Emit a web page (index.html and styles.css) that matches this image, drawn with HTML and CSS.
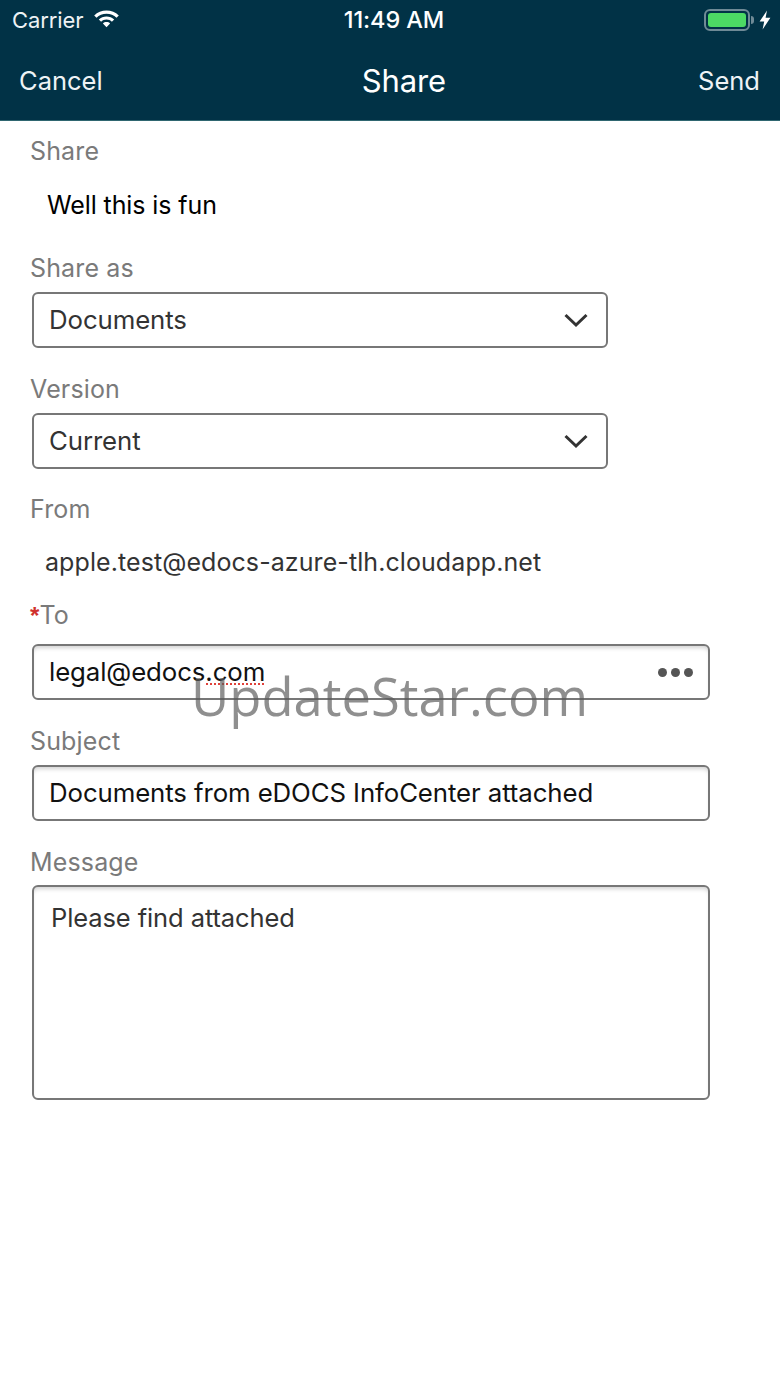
FILE: index.html
```html
<!DOCTYPE html>
<html lang="en">
<head>
<meta charset="utf-8">
<title>Share</title>
<link rel="stylesheet" href="styles.css">
</head>
<body>
<div class="page">
  <header class="header">
    <div class="status">
      <div class="status-left">
        <span class="carrier">Carrier</span>
        <svg class="wifi" width="27" height="20" viewBox="0 0 27 20"><path d="M13.5 2.5C8.8 2.5 4.4 4.3 1.2 7.4l2.3 2.4c2.6-2.5 6.1-4 10-4s7.4 1.5 10 4l2.3-2.4C22.6 4.3 18.2 2.5 13.5 2.5z" fill="#fff"/><path d="M13.5 8.4c-2.9 0-5.7 1.1-7.7 3.1l2.3 2.3c1.4-1.4 3.3-2.2 5.4-2.2s4 .8 5.4 2.2l2.3-2.3c-2-2-4.8-3.1-7.7-3.1z" fill="#fff"/><path d="M13.5 14c-1.4 0-2.7.5-3.6 1.4l3.6 3.8 3.6-3.8c-.9-.9-2.2-1.4-3.6-1.4z" fill="#fff"/></svg>
      </div>
      <span class="clock">11:49 AM</span>
      <div class="status-right">
        <div class="battery"><div class="battery-fill"></div></div>
        <div class="battery-cap"></div>
        <svg class="bolt" width="12" height="20" viewBox="0 0 12 20"><path d="M8 .5 .6 11.6h4.6L3.6 19.5 11.4 7.8H6.6z" fill="#fff"/></svg>
      </div>
    </div>
    <nav class="nav">
      <span class="nav-btn">Cancel</span>
      <span class="nav-title">Share</span>
      <span class="nav-btn">Send</span>
    </nav>
  </header>
  <main class="form">
    <div class="label">Share</div>
    <div class="static static-doc">Well this is fun</div>
    <div class="label label-as">Share as</div>
    <div class="box box-short">
      <span class="box-text">Documents</span>
      <svg class="chevron" width="26" height="16" viewBox="0 0 26 16"><path d="M2.5 3 13 13 23.5 3" fill="none" stroke="#333" stroke-width="3"/></svg>
    </div>
    <div class="label label-version">Version</div>
    <div class="box box-short">
      <span class="box-text">Current</span>
      <svg class="chevron" width="26" height="16" viewBox="0 0 26 16"><path d="M2.5 3 13 13 23.5 3" fill="none" stroke="#333" stroke-width="3"/></svg>
    </div>
    <div class="label label-next">From</div>
    <div class="static static-from">apple.test@edocs-azure-tlh.cloudapp.net</div>
    <div class="label label-to"><span class="req">*</span>To</div>
    <div class="box box-wide box-inset box-to">
      <span class="box-text box-text-black"><span>legal@edocs</span><span class="misspelt">.com</span></span>
      <span class="dots"><i></i><i></i><i></i></span>
    </div>
    <div class="label label-subject">Subject</div>
    <div class="box box-wide box-inset">
      <span class="box-text box-text-black">Documents from eDOCS InfoCenter attached</span>
    </div>
    <div class="label label-message">Message</div>
    <div class="box box-wide box-inset box-area">
      <span class="box-text box-text-area">Please find attached</span>
    </div>
  </main>
  <div class="watermark">UpdateStar.com</div>
</div>
</body>
</html>
```
FILE: styles.css
```css
* { box-sizing: border-box; }
html, body { margin: 0; padding: 0; background: #fff; }
body { font-family: Inter, "Liberation Sans", sans-serif; }
.page { position: relative; width: 780px; height: 1387px; overflow: hidden; background: #fff; }
.header { height: 121px; background: #013246; border-bottom: 1px solid #2f6670; color: #fff; display: flex; flex-direction: column; }
.status { height: 39px; padding: 0 12px; display: grid; grid-template-columns: 1fr auto 1fr; align-items: center; }
.status-left { display: flex; align-items: center; gap: 10px; }
.carrier { font-size: 22px; letter-spacing: -0.1px; color: #eef3f5; }
.wifi { margin-top: -3px; }
.clock { font-size: 23.5px; font-weight: 500; letter-spacing: -0.1px; margin-left: 8px; }
.status-right { display: flex; align-items: center; justify-content: flex-end; margin-right: -3px; }
.battery { width: 46px; height: 22px; border: 2px solid #6f8a96; border-radius: 6px; padding: 2px; }
.battery-fill { height: 100%; background: #4cd964; border-radius: 3px; }
.battery-cap { width: 3px; height: 8px; background: #6f8a96; border-radius: 0 3px 3px 0; margin-left: 1px; }
.bolt { margin-left: 5px; }
.nav { flex: 1; padding: 1px 20px 0 19px; display: flex; align-items: center; justify-content: space-between; position: relative; }
.nav-btn { font-size: 25.5px; letter-spacing: 0; color: #eef3f5; }
.nav-title { font-size: 31px; letter-spacing: -0.1px; margin-left: 7px; }
.form { padding: 15px 0 0 30px; display: flex; flex-direction: column; align-items: flex-start; }
.label { height: 30px; line-height: 30px; font-size: 25px; letter-spacing: 0.15px; color: #7a7a7a; }
.label-as { margin-top: 33px; margin-bottom: 9px; }
.label-version { margin-top: 26px; margin-bottom: 9px; }
.label-next { margin-top: 25px; margin-bottom: 9px; }
.label-to { margin-top: 23px; margin-bottom: 14px; }
.label-subject { margin-top: 26px; margin-bottom: 9px; }
.label-message { margin-top: 26px; margin-bottom: 8px; }
.req { font-family: "Liberation Sans", sans-serif; font-size: 24px; color: #d0312d; font-weight: 700; }
.static { height: 30px; line-height: 30px; font-size: 25px; letter-spacing: -0.1px; }
.static-doc { margin: 24px 0 0 17px; color: #000; }
.static-from { margin: 14px 0 0 15px; color: #333; letter-spacing: 0.08px; }
.box { height: 56px; margin-left: 2px; padding: 0 15px; border: 2px solid #777; border-radius: 6px; display: flex; align-items: center; justify-content: space-between; background: #fff; flex-shrink: 0; }
.box-short { width: 576px; padding-right: 17px; }
.box-wide { width: 678px; }
.box-inset { box-shadow: inset 0 4px 4px -2px rgba(0, 0, 0, 0.18); }
.box-area { height: 215px; align-items: flex-start; padding: 16px 17px 0 17px; }
.box-text { font-size: 25.8px; letter-spacing: -0.1px; line-height: 30px; color: #333; white-space: nowrap; }
.box-text-black { color: #111; }
.box-text-area { font-size: 25.5px; }
.misspelt { background-image: radial-gradient(circle, #e0413a 1px, transparent 1.3px); background-size: 4px 4px; background-repeat: repeat-x; background-position: 0 26px; }
.box-to { padding-right: 15px; }
.dots { display: flex; gap: 4px; }
.dots i { width: 9px; height: 9px; border-radius: 50%; background: #555; display: block; }
.watermark { position: absolute; left: 191px; top: 666px; font-family: "Open Sans", "Noto Sans", sans-serif; font-size: 52.5px; line-height: 60px; color: rgba(90, 90, 90, 0.68); white-space: nowrap; }
```
